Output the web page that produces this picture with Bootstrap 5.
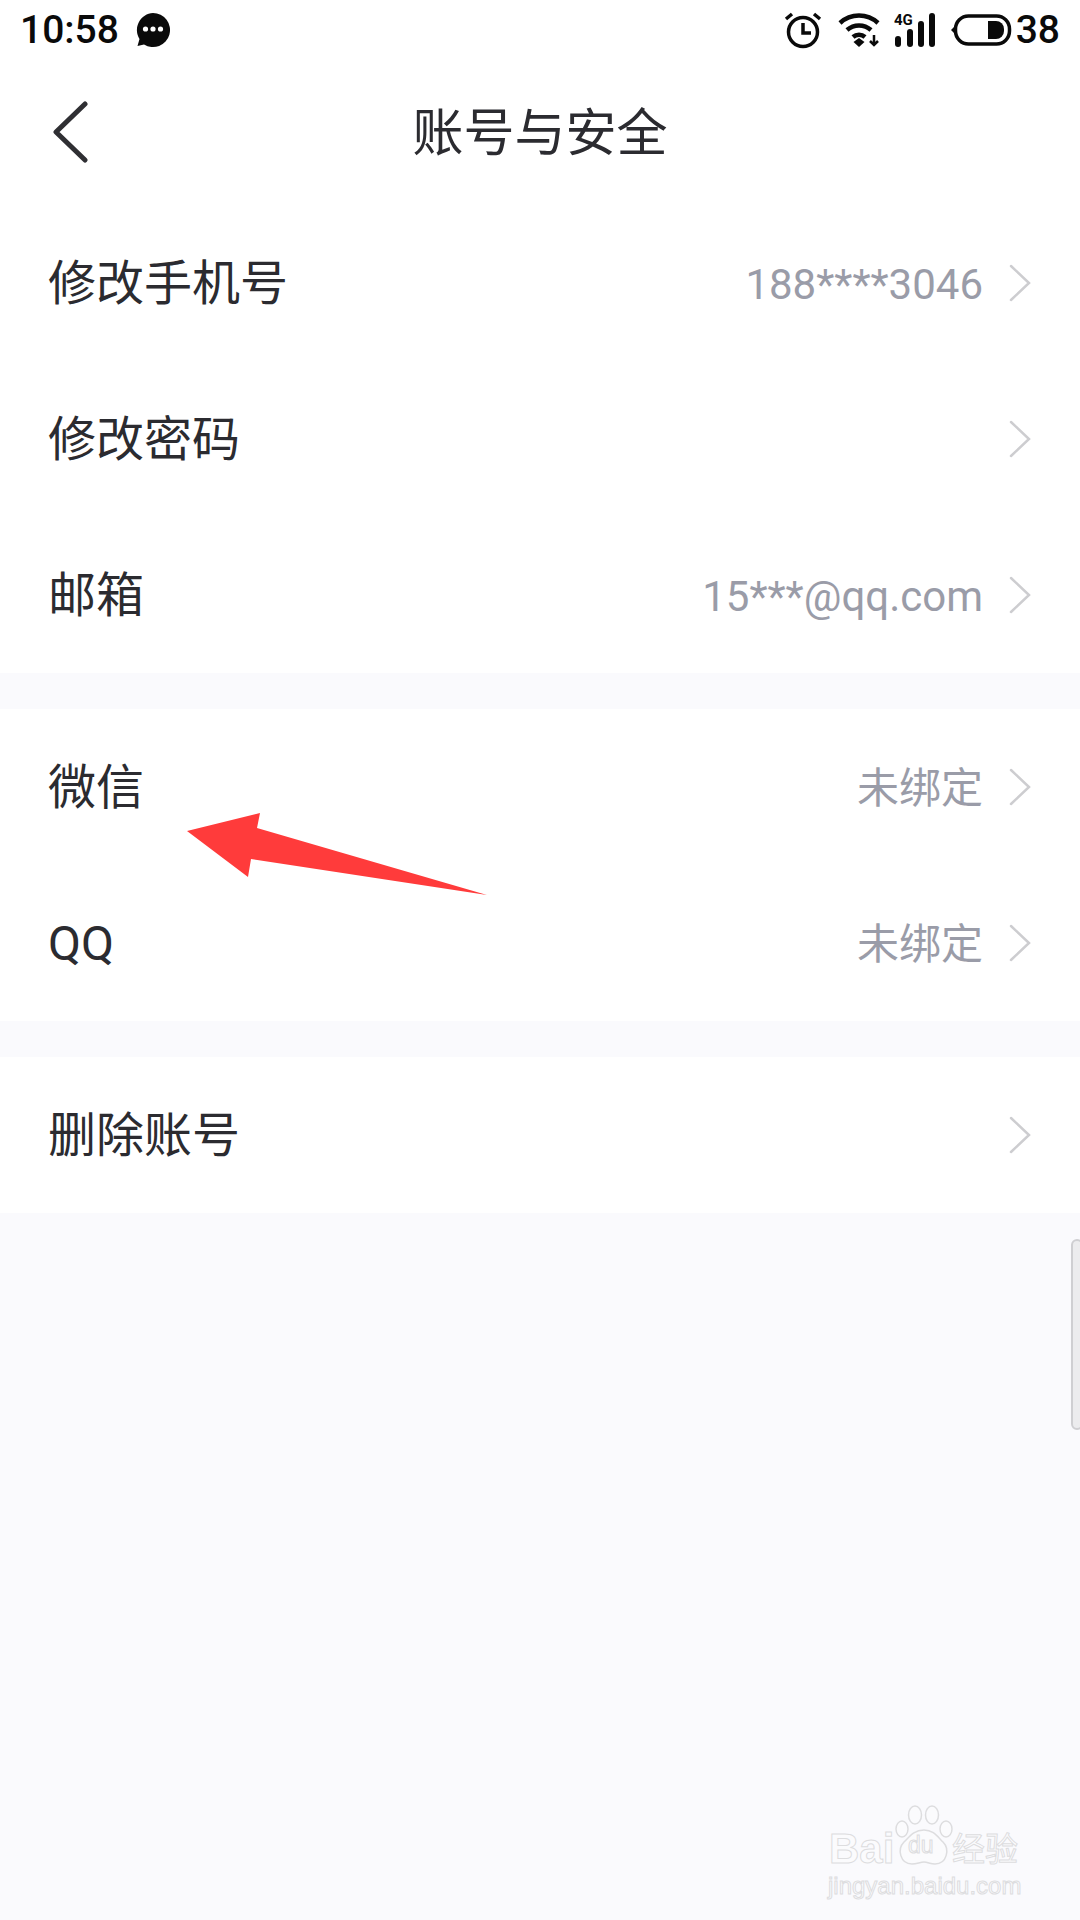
<!DOCTYPE html>
<html lang="zh-CN">
<head>
    <meta charset="UTF-8">
    <meta name="viewport" content="width=device-width, initial-scale=1.0">
    <title>账号与安全</title>
    <link rel="stylesheet" href="https://cdn.jsdelivr.net/npm/bootstrap@5.3.0/dist/css/bootstrap.min.css">
    <script defer src="https://cdn.jsdelivr.net/npm/bootstrap@5.3.0/dist/js/bootstrap.bundle.min.js"></script>
    <style>
        body {
            background-color: #fafafd;
            font-family: Roboto, "Noto Sans CJK SC", sans-serif;
            width: 1080px;
            height: 1920px;
            overflow: hidden;
            position: relative;
        }
        .status-bar {
            height: 60px;
            padding: 0 20px;
            color: #0a0a0a;
            font-size: 39px;
            font-weight: 500;
            line-height: 60px;
        }
        .signal-icon {
            margin: 0 14px 0 12px;
        }
        .title-bar {
            height: 145px;
            position: relative;
        }
        .title-bar h1 {
            font-size: 51px;
            font-weight: 400;
            color: #2b2b30;
            margin: 0;
            padding-top: 2px;
        }
        .back-icon {
            position: absolute;
            left: 52px;
            top: 41px;
        }
        .group-box {
            margin-bottom: 36px;
        }
        .item-row {
            height: 156px;
            padding: 0 49px 0 48px;
            font-size: 48px;
            color: #2b2b30;
        }
        .item-row > span {
            padding-top: 2px;
        }
        .item-value {
            font-size: 42px;
            color: #9a9ca8;
            margin-right: 26px;
        }
        .note-arrow {
            position: absolute;
            left: 0;
            top: 0;
        }
        .side-handle {
            position: absolute;
            right: -3px;
            top: 1239px;
            width: 12px;
            height: 191px;
            background: #ececee;
            border: 2px solid #cfcfd2;
            border-radius: 8px;
        }
        .mark-box {
            position: absolute;
            left: 826px;
            top: 1800px;
            width: 200px;
            color: #fbfbfd;
            -webkit-text-stroke: 1px #dddddf;
        }
        .mark-logo {
            font-family: "Liberation Sans", sans-serif;
            font-size: 42px;
            font-weight: 700;
            line-height: 44px;
            position: absolute;
            left: 3px;
            top: 27px;
        }
        .mark-cn {
            font-size: 33px;
            line-height: 40px;
            position: absolute;
            left: 126px;
            top: 27px;
            white-space: nowrap;
            font-family: "Noto Sans CJK SC", sans-serif;
        }
        .mark-url {
            font-size: 24px;
            line-height: 30px;
            font-weight: 300;
            position: absolute;
            left: 2px;
            top: 71px;
            white-space: nowrap;
            font-family: "Liberation Sans", sans-serif;
        }
        .mark-paw {
            position: absolute;
            left: 69px;
            top: 5px;
        }
        .mark-du {
            font-family: "Liberation Sans", sans-serif;
            font-size: 23px;
            line-height: 24px;
            position: absolute;
            left: 82px;
            top: 33px;
        }
    </style>
</head>
<body>
    <div class="status-bar d-flex align-items-center bg-white">
        <span>10:58</span>
        <svg class="ms-3" width="36" height="36" viewBox="0 0 36 36">
            <path d="M18 1a17 17 0 1 1-9 31.4L2.500 34l2-7A17 17 0 0 1 18 1z" fill="#0a0a0a"/>
            <circle cx="10.500" cy="17" r="2.600" fill="#fff"/>
            <circle cx="18" cy="17" r="2.600" fill="#fff"/>
            <circle cx="25.500" cy="17" r="2.600" fill="#fff"/>
        </svg>
        <div class="ms-auto d-flex align-items-center">
            <svg width="38" height="38" viewBox="0 0 38 38" fill="none" stroke="#0a0a0a">
                <circle cx="19" cy="21" r="14.500" stroke-width="3.500"/>
                <path d="M19 12v10h8" stroke-width="3.500"/>
                <path d="M2 8l6-5M36 8l-6-5" stroke-width="3.500"/>
            </svg>
            <svg class="ms-3" width="44" height="36" viewBox="0 0 44 36" fill="none" stroke="#0a0a0a" stroke-width="4.500">
                <path d="M2 11a28 28 0 0 1 38 0"/>
                <path d="M9 18a18 18 0 0 1 24 0"/>
                <path d="M15 25a9 9 0 0 1 12 0"/>
                <path d="M15.500 30l5.500-4 5.500 4-5.500 5z" fill="#0a0a0a" stroke="none"/>
                <path d="M36 23v10M32 29l4 4 4-4" stroke-width="2.500"/>
            </svg>
            <svg class="signal-icon" width="42" height="36" viewBox="0 0 42 36">
                <rect x="1" y="24" width="6" height="11" rx="3" fill="#0a0a0a"/>
                <rect x="13" y="17" width="6" height="18" rx="3" fill="#0a0a0a"/>
                <rect x="24" y="9" width="6" height="26" rx="3" fill="#0a0a0a"/>
                <rect x="35" y="1" width="6" height="34" rx="3" fill="#0a0a0a"/>
                <text x="0" y="13" font-family="Roboto, sans-serif" font-size="15" font-weight="700" fill="#0a0a0a">4G</text>
            </svg>
            <svg width="62" height="32" viewBox="0 0 62 32" fill="none">
                <path d="M4 13l-3 3 3 3z" fill="#0a0a0a"/>
                <rect x="5.500" y="2" width="54" height="28" rx="13" stroke="#0a0a0a" stroke-width="3.500"/>
                <path d="M38 7h8a8 8 0 0 1 8 8v2a8 8 0 0 1-8 8h-8z" fill="#0a0a0a"/>
            </svg>
            <span class="ms-1">38</span>
        </div>
    </div>

    <div class="title-bar bg-white d-flex align-items-center justify-content-center">
        <svg class="back-icon" width="38" height="62" viewBox="0 0 38 62" fill="none" stroke="#2f2f33" stroke-width="5" stroke-linecap="round" stroke-linejoin="round">
            <path d="M33 3L4 31l29 28"/>
        </svg>
        <h1>账号与安全</h1>
    </div>

    <div class="group-box bg-white">
        <div class="item-row d-flex align-items-center">
            <span>修改手机号</span>
            <span class="item-value ms-auto">188****3046</span>
            <svg width="22" height="38" viewBox="0 0 22 38" fill="none" stroke="#cdcdd0" stroke-width="2.500" stroke-linecap="round"><path d="M2 2l18 17L2 36"/></svg>
        </div>
        <div class="item-row d-flex align-items-center">
            <span>修改密码</span>
            <svg class="ms-auto" width="22" height="38" viewBox="0 0 22 38" fill="none" stroke="#cdcdd0" stroke-width="2.500" stroke-linecap="round"><path d="M2 2l18 17L2 36"/></svg>
        </div>
        <div class="item-row d-flex align-items-center">
            <span>邮箱</span>
            <span class="item-value ms-auto">15***@qq.com</span>
            <svg width="22" height="38" viewBox="0 0 22 38" fill="none" stroke="#cdcdd0" stroke-width="2.500" stroke-linecap="round"><path d="M2 2l18 17L2 36"/></svg>
        </div>
    </div>

    <div class="group-box bg-white">
        <div class="item-row d-flex align-items-center">
            <span>微信</span>
            <span class="item-value ms-auto">未绑定</span>
            <svg width="22" height="38" viewBox="0 0 22 38" fill="none" stroke="#cdcdd0" stroke-width="2.500" stroke-linecap="round"><path d="M2 2l18 17L2 36"/></svg>
        </div>
        <div class="item-row d-flex align-items-center">
            <span>QQ</span>
            <span class="item-value ms-auto">未绑定</span>
            <svg width="22" height="38" viewBox="0 0 22 38" fill="none" stroke="#cdcdd0" stroke-width="2.500" stroke-linecap="round"><path d="M2 2l18 17L2 36"/></svg>
        </div>
    </div>

    <div class="group-box bg-white">
        <div class="item-row d-flex align-items-center">
            <span>删除账号</span>
            <svg class="ms-auto" width="22" height="38" viewBox="0 0 22 38" fill="none" stroke="#cdcdd0" stroke-width="2.500" stroke-linecap="round"><path d="M2 2l18 17L2 36"/></svg>
        </div>
    </div>

    <svg class="note-arrow" width="1080" height="1920" viewBox="0 0 1080 1920">
        <polygon points="187,831 260,813 257,828 487,895 251,859 248,877" fill="#ff3b3b"/>
    </svg>

    <div class="side-handle"></div>

    <div class="mark-box">
        <svg class="mark-paw" width="58" height="62" viewBox="0 0 58 62" fill="#fbfbfd" stroke="#dddddf" stroke-width="1.500">
            <ellipse cx="20" cy="10" rx="6.500" ry="9"/>
            <ellipse cx="37" cy="10" rx="6.500" ry="9"/>
            <ellipse cx="7" cy="24" rx="6" ry="8"/>
            <ellipse cx="51" cy="24" rx="6" ry="8"/>
            <path d="M29 25c9 0 13 6 19 12 7 7 4 22-8 22-5 0-7-2-11-2s-7 2-12 2c-12 0-15-15-8-22 6-6 10-12 20-12z"/>
        </svg>
        <span class="mark-logo">Bai</span>
        <span class="mark-du">du</span>
        <span class="mark-cn">经验</span>
        <span class="mark-url">jingyan.baidu.com</span>
    </div>
</body>
</html>
